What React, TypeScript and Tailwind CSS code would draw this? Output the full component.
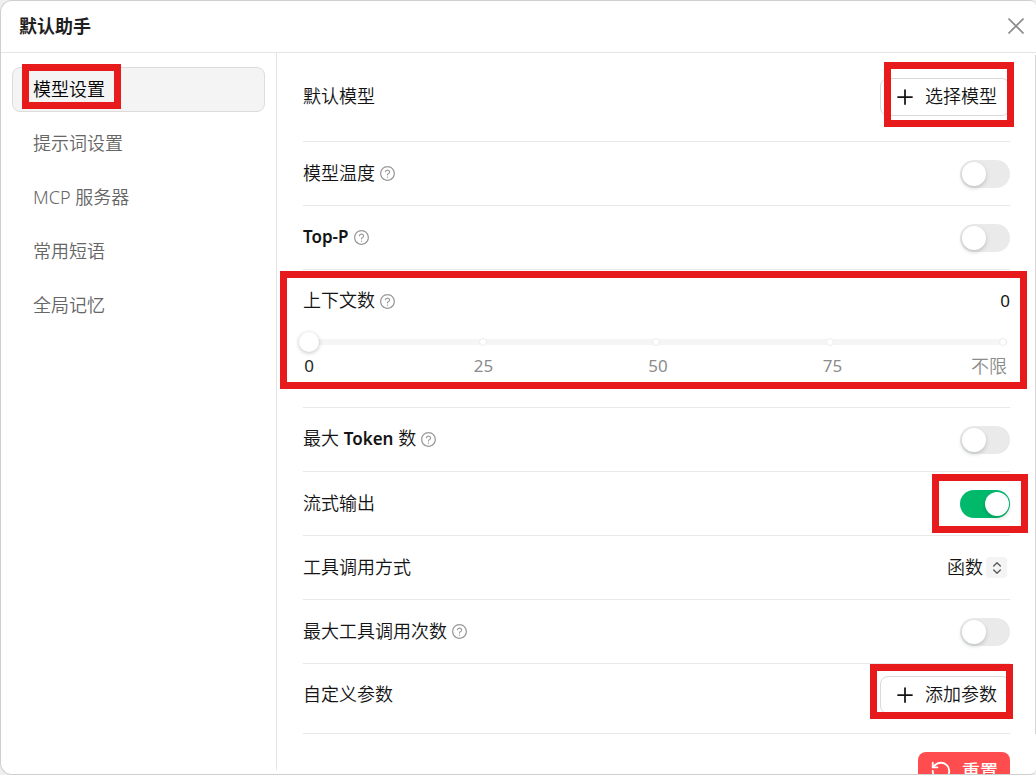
import React, { useState } from 'react';
import { AiOutlineQuestionCircle } from 'react-icons/ai';
import { ChevronsUpDown, Plus, RotateCcw } from 'lucide-react';

const NAV_ITEMS = ['模型设置', '提示词设置', 'MCP 服务器', '常用短语', '全局记忆'];

const MARKS = [
  { value: 0, label: '0' },
  { value: 25, label: '25' },
  { value: 50, label: '50' },
  { value: 75, label: '75' },
  { value: 100, label: '不限' },
];

function Highlight({ className }: { className: string }) {
  return <span aria-hidden className={`pointer-events-none absolute z-10 border-[7px] border-[#e71b1b] ${className}`} />;
}

function HelpIcon() {
  return <AiOutlineQuestionCircle size={17} className="ml-1 shrink-0 text-[#999999]" />;
}

interface SwitchProps {
  id: string;
  defaultChecked?: boolean;
}

function Switch({ id, defaultChecked }: SwitchProps) {
  return (
    <input
      id={id}
      type="checkbox"
      role="switch"
      defaultChecked={defaultChecked}
      className="flex h-7 w-[50px] cursor-pointer appearance-none items-center rounded-full bg-[#eaeaea] px-0.5 transition-colors before:h-6 before:w-6 before:rounded-full before:bg-white before:shadow-[0_2px_4px_rgba(0,35,11,0.2)] before:content-[''] checked:justify-end checked:bg-[#00b96b] checked:px-px"
    />
  );
}

interface RowProps {
  label: React.ReactNode;
  htmlFor?: string;
  help?: boolean;
  className?: string;
  children: React.ReactNode;
}

function Row({ label, htmlFor, help, className = 'h-16', children }: RowProps) {
  return (
    <div className={`flex items-center justify-between border-b border-[#e8e8e8] ${className}`}>
      <div className="flex items-center">
        <label htmlFor={htmlFor} className="pb-0.5">
          {label}
        </label>
        {help && <HelpIcon />}
      </div>
      {children}
    </div>
  );
}

function OutlineButton({ children }: { children: React.ReactNode }) {
  return (
    <button
      type="button"
      className="flex h-[38px] items-center gap-2 rounded-lg border border-[#d9d9d9] bg-white px-3 hover:border-[#00b96b]"
    >
      <Plus size={24} strokeWidth={1.75} />
      <span className="pb-0.5">{children}</span>
    </button>
  );
}

function ContextSlider() {
  const [count, setCount] = useState(0);

  return (
    <div className="relative h-[138px] border-b border-[#e8e8e8]">
      <Highlight className="-left-[23px] -right-[17px] top-px h-[118px]" />
      <div className="flex h-[62px] items-center justify-between">
        <div className="flex items-center">
          <label htmlFor="context-count" className="pb-0.5">
            上下文数
          </label>
          <HelpIcon />
        </div>
        <output htmlFor="context-count" className="text-[17px] font-normal">
          {count === 100 ? '不限' : count}
        </output>
      </div>
      <div className="ml-1.5 mr-[7px]">
        <div className="relative -mx-2.5 h-5">
          <div className="absolute inset-x-1.5 top-[7px] h-1.5 rounded-full bg-[#f5f5f5]" />
          <div className="absolute inset-x-2.5 top-1.5 flex justify-between">
            {MARKS.map((mark) => (
              <span key={mark.value} className="flex w-0 justify-center">
                <span className="h-2 w-2 shrink-0 rounded-full border border-[#ececec] bg-white" />
              </span>
            ))}
          </div>
          <input
            id="context-count"
            type="range"
            min={0}
            max={100}
            value={count}
            onChange={(e) => setCount(Number(e.target.value))}
            className="relative block h-5 w-full cursor-pointer appearance-none bg-transparent [&::-webkit-slider-thumb]:h-5 [&::-webkit-slider-thumb]:w-5 [&::-webkit-slider-thumb]:appearance-none [&::-webkit-slider-thumb]:rounded-full [&::-webkit-slider-thumb]:bg-white [&::-webkit-slider-thumb]:shadow-[0_1px_4px_rgba(0,0,0,0.25)]"
          />
        </div>
        <div className="mt-0.5 flex justify-between text-[17px] font-normal leading-6">
          {MARKS.map((mark) => (
            <span
              key={mark.value}
              className={`flex w-0 whitespace-nowrap ${mark.value === 100 ? '-mr-1 justify-end text-[18px] font-[350]' : 'justify-center'} ${
                mark.value === count ? 'text-[#262626]' : 'text-[#8c8c8c]'
              }`}
            >
              {mark.label}
            </span>
          ))}
        </div>
      </div>
    </div>
  );
}

export default function App() {
  const [active, setActive] = useState(NAV_ITEMS[0]);

  return (
    <div className="h-screen overflow-hidden bg-[#efefef] font-['Noto_Sans','Noto_Sans_CJK_SC',sans-serif] text-[18px] font-[350] leading-6 text-[#141414]">
      <div
        role="dialog"
        aria-label="默认助手"
        className="flex h-full flex-col overflow-hidden rounded-xl rounded-r-md border border-r-0 border-[#cfcfcf] bg-white"
      >
        <header className="flex h-[52px] shrink-0 items-center justify-between border-b border-[#e5e5e5] pb-0.5 pl-[18px] pr-3">
          <h1 className="font-bold text-[#1f1f1f]">默认助手</h1>
          <button type="button" aria-label="关闭" className="text-[#8c8c8c]">
            <svg width="16" height="16" viewBox="0 0 16 16" fill="none" stroke="currentColor" strokeWidth="1.6">
              <path d="M0.5 0.5l15 15M15.5 0.5l-15 15" />
            </svg>
          </button>
        </header>

        <div className="flex min-h-0 flex-1">
          <nav className="mb-1 flex w-[276px] shrink-0 flex-col gap-[9px] border-r border-[#e5e5e5] px-[11px] pt-[14px]">
            {NAV_ITEMS.map((item, i) => (
              <button
                key={item}
                type="button"
                onClick={() => setActive(item)}
                className={`relative flex h-[45px] shrink-0 items-center rounded-lg border px-5 pb-0.5 text-left ${
                  item === active ? 'border-[#dcdcdc] bg-[#f4f4f4] text-black' : 'border-transparent text-[#666666]'
                }`}
              >
                {item}
                {i === 0 && <Highlight className="-top-1 left-[9px] h-[45px] w-[99px]" />}
              </button>
            ))}
          </nav>

          <main className="relative min-w-0 flex-1 overflow-hidden px-[26px]">
            <Row label="默认模型" className="relative h-[89px]">
              <OutlineButton>选择模型</OutlineButton>
              <Highlight className="-right-1 top-[9px] h-[65px] w-[130px]" />
            </Row>
            <Row label="模型温度" htmlFor="temperature" help>
              <Switch id="temperature" />
            </Row>
            <Row label={<span className="text-[17px] font-semibold">Top-P</span>} htmlFor="top-p" help>
              <Switch id="top-p" />
            </Row>
            <ContextSlider />
            <Row
              label={
                <>
                  最大 <span className="text-[17px] font-semibold">Token</span> 数
                </>
              }
              htmlFor="max-tokens"
              help
            >
              <Switch id="max-tokens" />
            </Row>
            <Row label="流式输出" htmlFor="stream" className="relative h-16">
              <Switch id="stream" defaultChecked />
              <Highlight className="-right-[18px] top-0.5 h-[59px] w-24" />
            </Row>
            <Row label="工具调用方式" htmlFor="tool-mode">
              <div className="relative flex items-center pr-[3px]">
                <select
                  id="tool-mode"
                  className="cursor-pointer appearance-none bg-transparent pb-0.5 pr-6 outline-none [field-sizing:content]"
                >
                  <option>函数</option>
                  <option>提示词</option>
                </select>
                <span className="pointer-events-none absolute right-[3px] flex h-[21px] w-[21px] items-center justify-center rounded bg-[#f4f4f4]">
                  <ChevronsUpDown size={16} strokeWidth={2} className="text-[#595959]" />
                </span>
              </div>
            </Row>
            <Row label="最大工具调用次数" htmlFor="max-tool-calls" help>
              <Switch id="max-tool-calls" />
            </Row>
            <Row label="自定义参数" className="relative h-[70px] pb-2">
              <OutlineButton>添加参数</OutlineButton>
              <Highlight className="-right-[3px] top-0 h-[55px] w-[143px]" />
            </Row>
            <div className="flex justify-end pt-[18px]">
              <button
                type="button"
                className="flex h-[38px] items-center gap-2.5 rounded-lg bg-[#ff4d4f] px-3 font-medium text-white"
              >
                <RotateCcw size={22} strokeWidth={2} />
                重置
              </button>
            </div>
            <span aria-hidden className="absolute bottom-10 right-0 top-0.5 w-px bg-[#d4d4d4]" />
          </main>
        </div>
      </div>
    </div>
  );
}
